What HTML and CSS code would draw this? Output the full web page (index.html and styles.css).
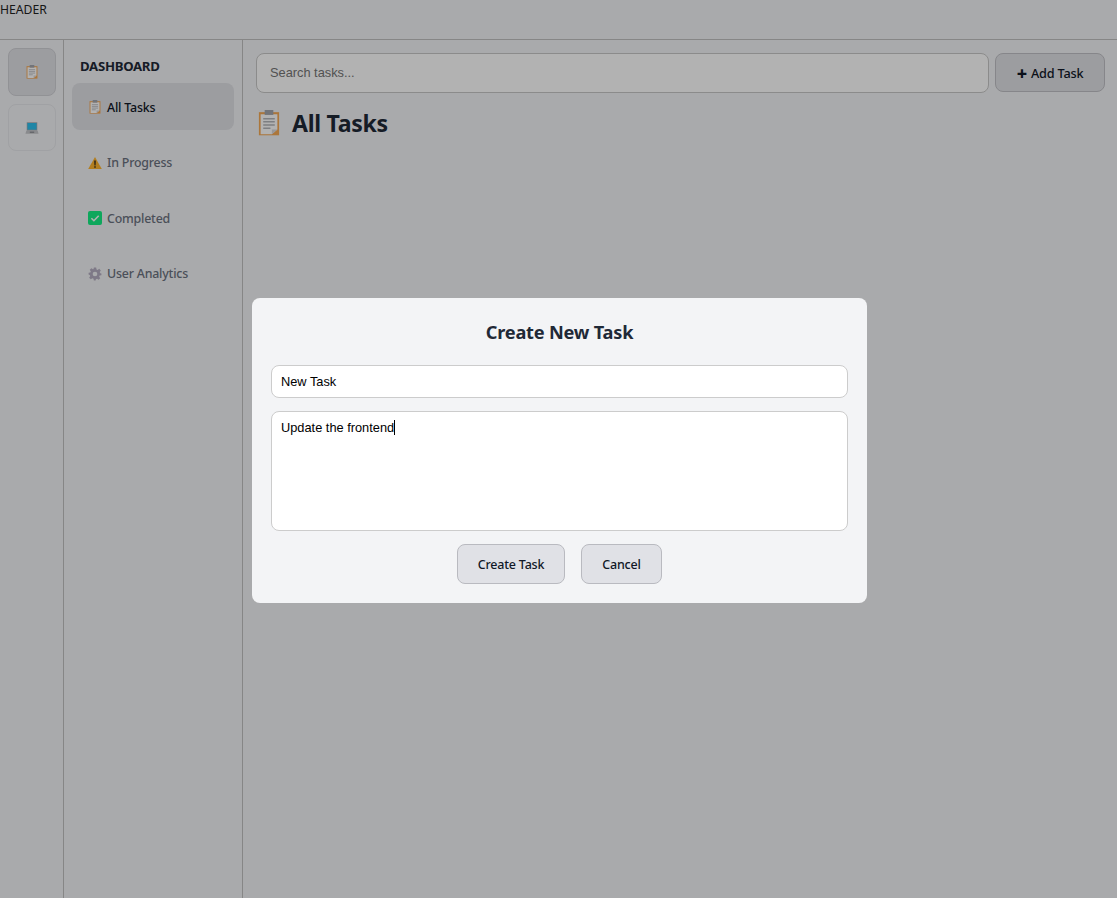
FILE: index.html
```html
<!DOCTYPE html>
<html lang="en">

<head>
    <meta charset="UTF-8">
    <meta name="viewport" content="width=device-width, initial-scale=1.0">
    <title>Task Dashboard</title>
    <link rel="stylesheet" href="styles.css">
</head>

<body>
    <svg class="defs" width="0" height="0" aria-hidden="true">
        <symbol id="clipboard" viewBox="0 0 16 18">
            <rect x="1" y="1.5" width="14" height="16" fill="#f5a955"/>
            <path d="M2.2 3h11.6v10.5L10 16.8H2.2z" fill="#fff"/>
            <path d="M13.8 13.5L10 16.8v-3.3z" fill="#d8d8dc"/>
            <rect x="5" y="0" width="6" height="3.4" fill="#a4a7ae"/>
            <path d="M4 6h8M4 8.2h8M4 10.4h8M4 12.6h5" stroke="#b4b6bb" stroke-width="1"/>
        </symbol>
        <symbol id="laptop" viewBox="0 0 16 16">
            <rect x="2" y="1.5" width="12" height="9.5" fill="#a4a7ae"/>
            <rect x="2.800" y="2.300" width="10.400" height="7.600" fill="#2bc0ee"/>
            <path d="M1.500 11h13l1 3.500H.5z" fill="#c4c6ca"/>
            <rect x="5.500" y="12.200" width="5" height="1.200" fill="#80838a"/>
        </symbol>
        <symbol id="warning" viewBox="0 0 14 13">
            <path d="M7 .5L13.800 12.600H.2z" fill="#ffb52e"/>
            <path d="M6.300 4h1.400l-.2 5H6.500z" fill="#1c1c1c"/>
            <rect x="6.300" y="9.800" width="1.400" height="1.400" fill="#1c1c1c"/>
        </symbol>
        <symbol id="check" viewBox="0 0 14 14">
            <rect width="14" height="14" rx="2" fill="#15ef84"/>
            <path d="M3.400 7.200l2.500 2.500 4.800-5" fill="none" stroke="#fff" stroke-width="1.600"/>
        </symbol>
        <symbol id="gear" viewBox="0 0 24 24">
            <path fill="#b5aec2" fill-rule="evenodd" d="M10 1h4l.6 3.200 1.900.8 2.700-1.800 2.800 2.800-1.800 2.700.8 1.900L23 11v3l-3 .6-.8 1.900 1.800 2.700-2.800 2.800-2.700-1.800-1.900.8L13 23h-3l-.6-2.900-1.900-.8-2.700 1.800L2 18.300l1.800-2.700-.8-1.900L1 13v-3l3-.6.8-1.900L3 4.800 5.800 2l2.700 1.800 1-.5zM12 8a4 4 0 100 8 4 4 0 000-8z"/>
        </symbol>
    </svg>

    <header class="top-bar">HEADER</header>

    <div class="layout">
        <nav class="rail">
            <a class="rail-btn rail-btn-active"><svg class="icon-sm"><use href="#clipboard"/></svg></a>
            <a class="rail-btn"><svg class="icon-sm"><use href="#laptop"/></svg></a>
        </nav>

        <aside class="sidebar">
            <h2 class="sidebar-title">DASHBOARD</h2>
            <a class="nav-item nav-item-active"><svg class="icon-sm"><use href="#clipboard"/></svg>All Tasks</a>
            <a class="nav-item"><svg class="icon-sm"><use href="#warning"/></svg>In Progress</a>
            <a class="nav-item"><svg class="icon-sm"><use href="#check"/></svg>Completed</a>
            <a class="nav-item"><svg class="icon-sm"><use href="#gear"/></svg>User Analytics</a>
        </aside>

        <main class="content">
            <div class="toolbar">
                <input class="search" type="text" placeholder="Search tasks...">
                <button class="add-btn"><span class="plus">+</span>Add Task</button>
            </div>
            <h1 class="page-title"><svg class="icon-lg"><use href="#clipboard"/></svg>All Tasks</h1>
        </main>
    </div>

    <div class="overlay">
        <div class="modal">
            <h2 class="modal-title">Create New Task</h2>
            <input class="field" type="text" value="New Task">
            <div class="field field-area">Update the frontend<span class="caret"></span></div>
            <div class="modal-actions">
                <button class="modal-btn modal-btn-create">Create Task</button>
                <button class="modal-btn modal-btn-cancel">Cancel</button>
            </div>
        </div>
    </div>
</body>

</html>
```

FILE: styles.css
```css
* {
    box-sizing: border-box;
}

body {
    font-family: 'Noto Sans', 'Liberation Sans', sans-serif;
    margin: 0;
    height: 898px;
    overflow: hidden;
    background: #f3f4f6;
    color: #111827;
}

.defs {
    position: absolute;
}

.top-bar {
    height: 40px;
    padding-top: 1px;
    border-bottom: 1px solid #c0c0c0;
    font-size: 12.2px;
    line-height: 18px;
    color: #222;
}

.layout {
    display: flex;
    height: 858px;
}

.rail {
    width: 64px;
    flex-shrink: 0;
    border-right: 1px solid #c0c0c0;
    padding: 8px;
}

.rail-btn {
    display: flex;
    align-items: center;
    justify-content: center;
    width: 48px;
    height: 47px;
    margin-bottom: 8px;
    border: 1px solid #e5e7eb;
    border-radius: 8px;
}

.rail-btn-active {
    background: #e0e1e6;
    border-color: #d0d1d6;
    height: 48px;
}

.icon-sm {
    width: 14px;
    height: 14px;
    flex-shrink: 0;
}

.icon-lg {
    width: 24px;
    height: 26px;
    flex-shrink: 0;
}

.sidebar {
    width: 179px;
    flex-shrink: 0;
    border-right: 1px solid #c0c0c0;
    padding: 8px;
}

.sidebar-title {
    margin: 8px 0 7px 8px;
    font-size: 13.2px;
    line-height: 20px;
    font-weight: 700;
    color: #1f2937;
    letter-spacing: -0.3px;
}

.nav-item {
    display: flex;
    align-items: center;
    gap: 5px;
    height: 47px;
    margin-bottom: 8.5px;
    padding: 1px 0 0 16px;
    border-radius: 8px;
    font-size: 12.4px;
    font-weight: 500;
    color: #6b7280;
    letter-spacing: -0.2px;
}

.nav-item-active {
    background: #e0e1e6;
    color: #111827;
}

.content {
    flex: 1;
    padding: 13px 12px 13px 13px;
}

.toolbar {
    display: flex;
    gap: 6px;
}

.search {
    flex: 1;
    height: 40px;
    padding: 0 13px 2px;
    background: #fff;
    border: 1px solid #c8c8c8;
    border-radius: 8px;
    font-family: 'Liberation Sans', sans-serif;
    font-size: 12.8px;
}

.search::placeholder {
    color: #757575;
}

.add-btn {
    display: flex;
    align-items: center;
    justify-content: center;
    gap: 4px;
    width: 110px;
    height: 39px;
    background: #e0e1e6;
    border: 1px solid #c0c1c6;
    border-radius: 8px;
    font-family: inherit;
    font-size: 12.7px;
    font-weight: 500;
    color: #111827;
    letter-spacing: -0.2px;
}

.plus {
    font-size: 18px;
    line-height: 16px;
    font-weight: 800;
}

.page-title {
    display: flex;
    align-items: center;
    gap: 11px;
    margin: 15px 0 0 1px;
    font-size: 23.1px;
    line-height: 30px;
    font-weight: 700;
    color: #1f2937;
    letter-spacing: -0.3px;
}

.overlay {
    position: fixed;
    inset: 0;
    display: flex;
    align-items: center;
    justify-content: center;
    padding: 3px 0 0 2px;
    background: rgba(0, 0, 0, 0.3);
}

.modal {
    width: 615px;
    height: 305px;
    padding: 19px;
    background: #f3f4f6;
    border-radius: 8px;
}

.modal-title {
    margin: 2px 0 20px;
    font-size: 18.2px;
    line-height: 26px;
    font-weight: 700;
    text-align: center;
    color: #1f2937;
    letter-spacing: -0.2px;
}

.field {
    display: block;
    width: 100%;
    height: 33px;
    padding: 0 9px;
    margin-bottom: 13px;
    background: #fff;
    border: 1px solid #ccc;
    border-radius: 8px;
    font-family: 'Liberation Sans', sans-serif;
    font-size: 12.8px;
    color: #000;
}

.field-area {
    height: 120px;
    padding-top: 8px;
    line-height: 15px;
}

.caret {
    display: inline-block;
    width: 1px;
    height: 15px;
    background: #000;
    vertical-align: top;
}

.modal-actions {
    display: flex;
    justify-content: center;
    gap: 16px;
}

.modal-btn {
    height: 40px;
    background: #e0e1e6;
    border: 1px solid #b9bac0;
    border-radius: 8px;
    font-family: inherit;
    font-size: 12.5px;
    font-weight: 500;
    color: #111827;
    letter-spacing: -0.2px;
}

.modal-btn-create {
    width: 108px;
}

.modal-btn-cancel {
    width: 81px;
}
```
